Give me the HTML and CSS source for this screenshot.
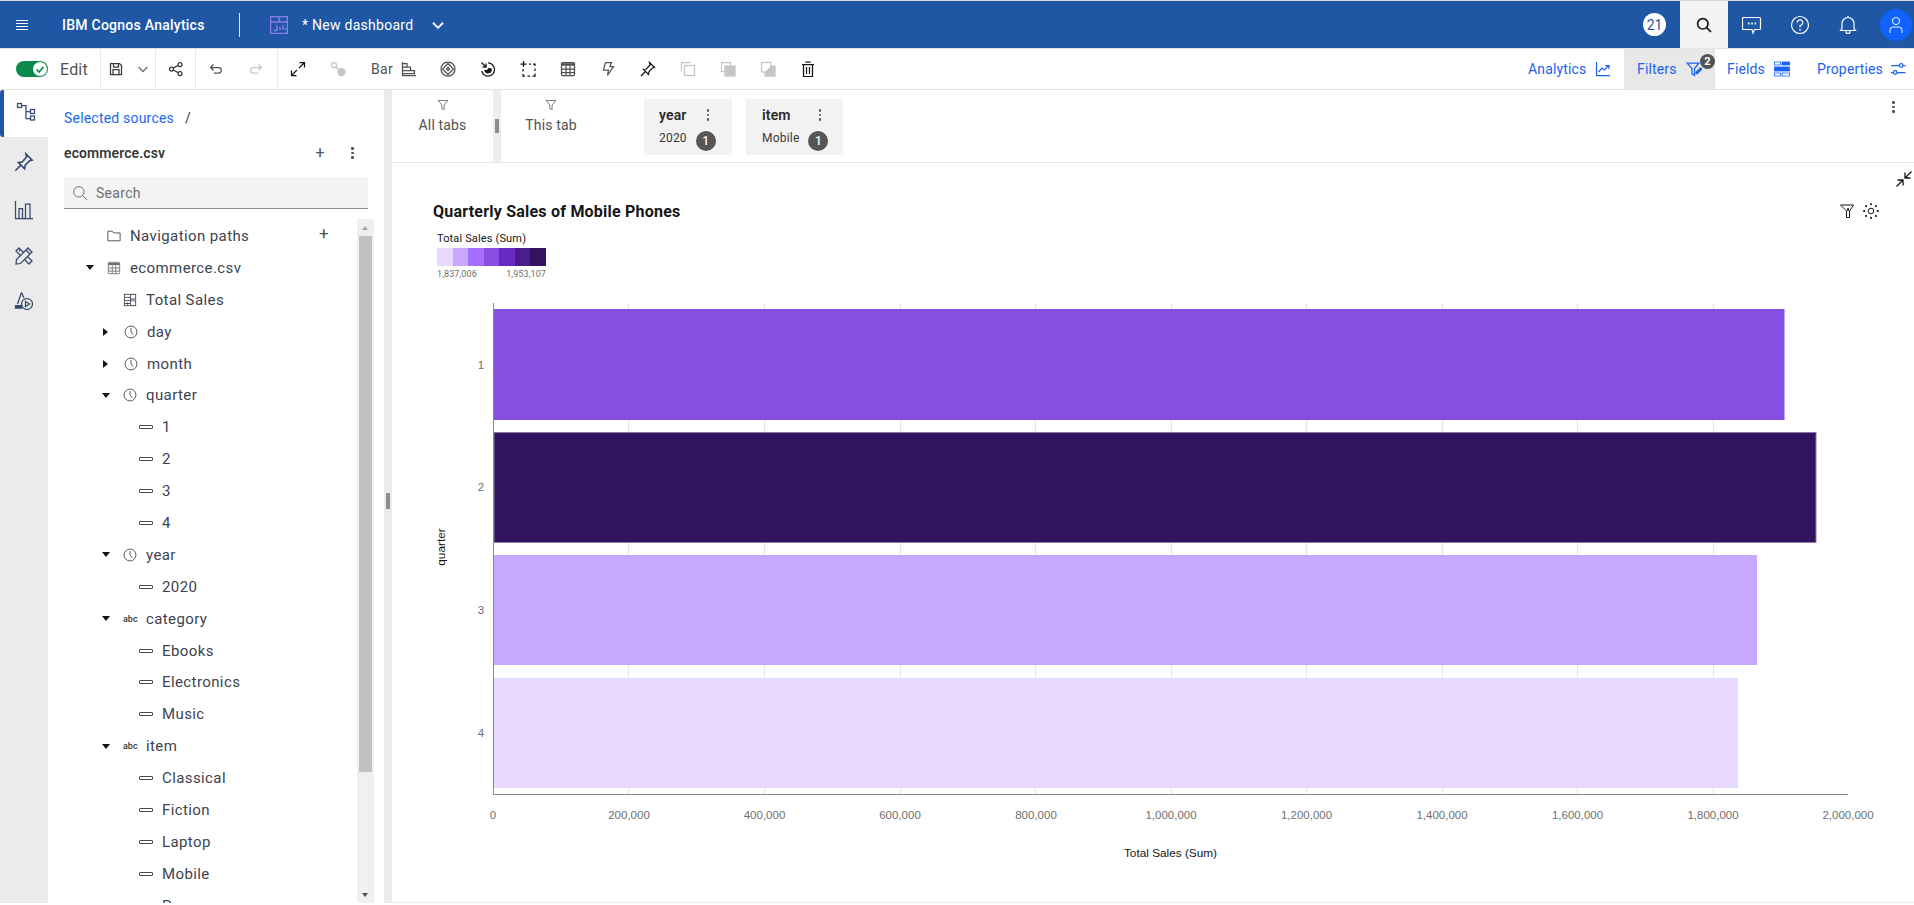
FILE: index.html
```html
<!DOCTYPE html>
<html lang="en">
<head>
<meta charset="utf-8">
<title>IBM Cognos Analytics</title>
<link rel="stylesheet" href="styles.css">
</head>
<body>
<svg class="sprite" width="0" height="0" aria-hidden="true">
  <symbol id="i-save" viewBox="0 0 16 16"><path d="M2.5 2.5h9l2 2v9h-11z"/><path d="M5.5 2.5v3.5h5v-3.5M5 13.5v-5h6v5"/></symbol>
  <symbol id="i-chev" viewBox="0 0 16 16"><path d="M3.5 6l4.5 4.500L12.500 6"/></symbol>
  <symbol id="i-share" viewBox="0 0 16 16"><circle cx="12" cy="3.500" r="2"/><circle cx="3.500" cy="8" r="2"/><circle cx="12" cy="12.500" r="2"/><path d="M5.300 7l4.900-2.600M5.300 9l4.900 2.600"/></symbol>
  <symbol id="i-undo" viewBox="0 0 16 16"><path d="M5.500 3.500L2.500 6.500l3 3M2.500 6.500h8a2.800 2.800 0 0 1 0 5.600H6"/></symbol>
  <symbol id="i-redo" viewBox="0 0 16 16"><path d="M10.500 3.500l3 3-3 3M13.500 6.500h-8a2.800 2.800 0 0 0 0 5.600H10"/></symbol>
  <symbol id="i-expand" viewBox="0 0 16 16"><path d="M9.500 1.500h5v5M14.500 1.500l-5.500 5.500M6.500 14.500h-5v-5M1.500 14.500l5.500-5.500"/></symbol>
  <symbol id="i-link" viewBox="0 0 16 16"><circle cx="4" cy="4" r="2.500"/><circle cx="11.500" cy="11" r="3.500" fill="currentColor"/><path d="M6 6l3 3"/></symbol>
  <symbol id="i-barh" viewBox="0 0 16 16"><path d="M1.500 1v13.500H15M1.500 2.500h4.500v3.500H1.500M1.500 6h8v3.500H1.500M1.500 9.500h12v3H1.500"/></symbol>
  <symbol id="i-diamond" viewBox="0 0 16 16"><circle cx="8" cy="8" r="7"/><path d="M8 2.500L13.500 8 8 13.500 2.500 8z"/><path d="M8 6.300L9.700 8 8 9.700 6.300 8z"/></symbol>
  <symbol id="i-spin" viewBox="0 0 16 16"><path d="M8 2a6.500 6.500 0 1 1-6.300 8"/><path d="M1.500 1.500l4.500 4.500M6 2.500V6H2.500"/><path d="M11 8a3 3 0 0 1-6 1.500c2 .2 3.500-.2 4-2z" fill="currentColor"/></symbol>
  <symbol id="i-select" viewBox="0 0 16 16"><path d="M3.500 0v6M.5 3h6" /><path d="M9 3h2M13 3h2v2M15 7.500v2.500M15 12.500v2.500h-2.500M10 15H7.500M5 15H3v-2M3 10.500V8" /></symbol>
  <symbol id="i-table" viewBox="0 0 16 16"><rect x="1.500" y="1.500" width="13" height="13" rx="1"/><path d="M1.500 3.500h13" stroke-width="2.500"/><path d="M1.500 8h13M1.500 11.500h13M6 5v9.500M10 5v9.500"/></symbol>
  <symbol id="i-bolt" viewBox="0 0 16 16"><path d="M5.500 1.500h6L10 5.500h3.500L7.500 14.500 8.500 9H3.500z"/></symbol>
  <symbol id="i-pin" viewBox="0 0 16 16"><path d="M9.500 1.500l5 5-2 .5-3.500 3.500-.5 3-5-5 3-.5L10 4z"/><path d="M5.500 10.500L1 15"/></symbol>
  <symbol id="i-copy" viewBox="0 0 16 16"><path d="M1.500 10.500v-9h9"/><rect x="4.500" y="4.500" width="10" height="10"/></symbol>
  <symbol id="i-front" viewBox="0 0 16 16"><path d="M4.500 10.500h-3v-9h9v3"/><rect x="5" y="5" width="10" height="10" fill="currentColor"/></symbol>
  <symbol id="i-back" viewBox="0 0 16 16"><path d="M11 5h4v10H5v-4" fill="currentColor"/><rect x="1.500" y="1.500" width="9.500" height="9.500"/></symbol>
  <symbol id="i-trash" viewBox="0 0 16 16"><path d="M2 3.500h12M5.500 1h5M3.500 3.500v12h9v-12M6.500 6v7M9.500 6v7"/></symbol>
  <symbol id="i-analytics" viewBox="0 0 16 16"><path d="M1.500 1v13.500H15"/><path d="M3.500 11l3.500-4 2.500 2 4-4.500M10.500 4.500h3.500V8"/></symbol>
  <symbol id="i-filteredit" viewBox="0 0 16 16"><path d="M1 2h12L8.500 7.500v7l-2.500-1.500V7.500z"/><path d="M10 11.500L14.500 7l1.200 1.200-4.500 4.500H10z" fill="currentColor"/></symbol>
  <symbol id="i-fields" viewBox="0 0 16 16"><rect x=".5" y="1" width="6" height="3"/><rect x="8" y="1" width="7.500" height="3" fill="currentColor"/><rect x=".5" y="6" width="15" height="4" fill="currentColor"/><rect x=".5" y="12" width="6" height="3"/><rect x="8" y="12" width="7.500" height="3"/></symbol>
  <symbol id="i-sliders" viewBox="0 0 16 16"><path d="M1 4.500h8.500M13 4.500h2.500M1 11.500h2.500M7 11.500h8.500"/><circle cx="11.200" cy="4.500" r="1.800"/><circle cx="5.200" cy="11.500" r="1.800"/></symbol>
  <symbol id="i-funnel" viewBox="0 0 16 16"><path d="M1.500 2h13L9.500 8v6l-3-1V8z"/></symbol>
  <symbol id="i-search" viewBox="0 0 16 16"><circle cx="6.800" cy="6.800" r="5.200"/><path d="M10.600 10.600L15 15"/></symbol>
  <symbol id="i-chat" viewBox="0 0 20 20"><path d="M2.500 2.500h15a1 1 0 0 1 1 1v10a1 1 0 0 1-1 1h-5l-1.500 3.500-1-3.500h-8.500a1 1 0 0 1-1-1v-10a1 1 0 0 1 1-1z"/><path d="M6 8.500h1.500M9.300 8.500h1.500M12.600 8.500h1.500" stroke-width="2"/></symbol>
  <symbol id="i-help" viewBox="0 0 20 20"><circle cx="10" cy="10" r="8.500"/><path d="M7.200 7.800A2.800 2.800 0 1 1 10 10.500v2"/><path d="M10 14v1.500" stroke-width="1.500"/></symbol>
  <symbol id="i-bell" viewBox="0 0 20 20"><path d="M2.500 15.500l1.500-2v-5a6 6 0 0 1 12 0v5l1.500 2zM8 15.500v1a2 2 0 0 0 4 0v-1M10 2.500v-1.500"/></symbol>
  <symbol id="i-user" viewBox="0 0 20 24"><circle cx="10" cy="7" r="4.500"/><path d="M2.500 22v-3.500a4 4 0 0 1 4-4h7a4 4 0 0 1 4 4V22"/></symbol>
  <symbol id="i-tree" viewBox="0 0 20 20"><rect x="1.500" y="1.500" width="4" height="4"/><rect x="14.500" y="7.500" width="4" height="4"/><rect x="14.500" y="14" width="4" height="4"/><path d="M5.500 3.500h4.500v13h4.500M10 9.500h4.500"/></symbol>
  <symbol id="i-barv" viewBox="0 0 20 20"><path d="M1.500 1v17.500H19M5 18V8.500h3.500V18M11.500 18V4H16v14"/></symbol>
  <symbol id="i-tools" viewBox="0 0 20 20"><path d="M2 5l3-3 13 13-3 3zM6.500 3.500L5 5M10 7l-1.500 1.500M13.500 10.500L12 12"/><path d="M14 2l4 4L6.500 17.500 2 18l.5-4.500z" fill="#ebebeb"/><path d="M12 4l4 4"/></symbol>
  <symbol id="i-shape" viewBox="0 0 20 20"><path d="M7.500 1.500L3.500 13M7.500 1.500L10 7"/><path d="M1.500 14.500h6v2.500h-6z" fill="currentColor"/><circle cx="13" cy="13" r="5.500"/><path d="M11.500 10.500l4 2.500-4 2.500z"/></symbol>
  <symbol id="i-folder" viewBox="0 0 16 16"><path d="M1 2.500h5l1.500 2h7.500v9H1z"/></symbol>
  <symbol id="i-clock" viewBox="0 0 16 16"><circle cx="8" cy="8" r="6.800"/><path d="M8 3.500v4.500l2.500 3"/></symbol>
  <symbol id="i-measure" viewBox="0 0 16 16"><rect x="1.500" y="1.500" width="13" height="13"/><path d="M8.500 1.500v13M1.500 5h7M1.500 8.500h7M1.500 12h7M3.500 12h3M5 10.500v3"/><rect x="9" y="6" width="5" height="3.500" fill="currentColor" stroke="none" opacity=".55"/></symbol>
  <symbol id="i-collapse" viewBox="0 0 20 20"><path d="M11 3.500V9h5.500M11 9l6.500-6.500M9 16.500V11H3.500M9 11l-6.500 6.500"/></symbol>
  <symbol id="i-filterx" viewBox="0 0 16 16"><path d="M1.500 2h13L10.500 8v6.500h-3V8z" /><path d="M9 5v3" stroke-width="1.600"/></symbol>
  <symbol id="i-gear" viewBox="0 0 16 16"><circle cx="8" cy="8" r="2.800"/><path d="M8 1v.3M8 14.700v.3M1 8h.3M14.700 8h.3M3 3l.2.2M12.800 12.800l.2.2M13 3l-.2.2M3 13l.2-.2" stroke-width="1.900" stroke-linecap="round"/></symbol>
</svg>

<header class="topbar">
  <button class="hamburger" aria-label="Menu"><span></span><span></span><span></span><span></span></button>
  <span class="brand">IBM Cognos Analytics</span>
  <span class="top-sep"></span>
  <svg class="dash-ic" viewBox="0 0 18 18"><rect x=".5" y=".5" width="17" height="17"/><path d="M.5 6h17M9 .5V6M7 9v5a2 2 0 0 1-3 0M10 11v3M13 9v5M15.500 12v2"/></svg>
  <span class="dash-name">* New dashboard</span>
  <svg class="ic top-chev"><use href="#i-chev"/></svg>
  <span class="spacer"></span>
  <span class="count">21</span>
  <span class="top-search"><svg class="ic"><use href="#i-search"/></svg></span>
  <span class="top-btn"><svg class="ic20"><use href="#i-chat"/></svg></span>
  <span class="top-btn"><svg class="ic20"><use href="#i-help"/></svg></span>
  <span class="top-btn"><svg class="ic20"><use href="#i-bell"/></svg></span>
  <span class="avatar"><svg class="ic-user"><use href="#i-user"/></svg></span>
</header>

<nav class="toolbar">
  <div class="tb-group tb-edit">
    <span class="toggle"><span class="knob"><svg viewBox="0 0 14 14"><path d="M3.500 7.500l2.500 2.500 4.500-5"/></svg></span></span>
    <span class="edit-label">Edit</span>
  </div>
  <div class="tb-group tb-save">
    <svg class="ic"><use href="#i-save"/></svg>
    <svg class="ic chev-gray"><use href="#i-chev"/></svg>
  </div>
  <div class="tb-group tb-w40"><svg class="ic"><use href="#i-share"/></svg></div>
  <div class="tb-group tb-w80">
    <span class="tb-btn"><svg class="ic"><use href="#i-undo"/></svg></span>
    <span class="tb-btn off"><svg class="ic"><use href="#i-redo"/></svg></span>
  </div>
  <div class="tb-tools">
    <span class="tb-btn dark"><svg class="ic"><use href="#i-expand"/></svg></span>
    <span class="tb-btn off"><svg class="ic"><use href="#i-link"/></svg></span>
    <span class="tb-bar">Bar<svg class="ic"><use href="#i-barh"/></svg></span>
    <span class="tb-btn"><svg class="ic"><use href="#i-diamond"/></svg></span>
    <span class="tb-btn dark"><svg class="ic"><use href="#i-spin"/></svg></span>
    <span class="tb-btn dark"><svg class="ic"><use href="#i-select"/></svg></span>
    <span class="tb-btn"><svg class="ic"><use href="#i-table"/></svg></span>
    <span class="tb-btn"><svg class="ic"><use href="#i-bolt"/></svg></span>
    <span class="tb-btn dark"><svg class="ic"><use href="#i-pin"/></svg></span>
    <span class="tb-btn off"><svg class="ic"><use href="#i-copy"/></svg></span>
    <span class="tb-btn off"><svg class="ic"><use href="#i-front"/></svg></span>
    <span class="tb-btn off"><svg class="ic"><use href="#i-back"/></svg></span>
    <span class="tb-btn dark"><svg class="ic"><use href="#i-trash"/></svg></span>
  </div>
  <span class="spacer"></span>
  <div class="tab tab-analytics"><span>Analytics</span><svg class="ic"><use href="#i-analytics"/></svg></div>
  <div class="tab tab-filters"><span>Filters</span><svg class="ic"><use href="#i-filteredit"/></svg><b class="tab-badge">2</b></div>
  <div class="tab tab-fields"><span>Fields</span><svg class="ic"><use href="#i-fields"/></svg></div>
  <div class="tab tab-props"><span>Properties</span><svg class="ic"><use href="#i-sliders"/></svg></div>
</nav>

<div class="workspace">
  <aside class="rail">
    <span class="rail-item active"><svg class="ic20"><use href="#i-tree"/></svg></span>
    <span class="rail-item"><svg class="ic20"><use href="#i-pin"/></svg></span>
    <span class="rail-item"><svg class="ic20"><use href="#i-barv"/></svg></span>
    <span class="rail-item"><svg class="ic20"><use href="#i-tools"/></svg></span>
    <span class="rail-item"><svg class="ic20"><use href="#i-shape"/></svg></span>
  </aside>

  <section class="panel">
    <div class="crumbs"><a class="crumb-link">Selected sources</a><span class="crumb-sep">/</span></div>
    <div class="source-row">
      <span class="source-name">ecommerce.csv</span>
      <span class="plus">+</span>
      <span class="kebab"><i></i><i></i><i></i></span>
    </div>
    <div class="search"><svg class="ic"><use href="#i-search"/></svg><span>Search</span></div>
    <div class="tree-wrap">
      <ul class="tree">
        <li class="row l0"><span class="tri"></span><svg class="ic14"><use href="#i-folder"/></svg><span>Navigation paths</span><span class="row-plus">+</span></li>
        <li class="row l0"><span class="tri down"></span><svg class="ic14 gray"><use href="#i-table"/></svg><span>ecommerce.csv</span></li>
        <li class="row l1"><span class="tri"></span><svg class="ic14"><use href="#i-measure"/></svg><span>Total Sales</span></li>
        <li class="row l1"><span class="tri right"></span><svg class="ic14"><use href="#i-clock"/></svg><span>day</span></li>
        <li class="row l1"><span class="tri right"></span><svg class="ic14"><use href="#i-clock"/></svg><span>month</span></li>
        <li class="row l1"><span class="tri down"></span><svg class="ic14"><use href="#i-clock"/></svg><span>quarter</span></li>
        <li class="row l2"><span class="dash"></span><span>1</span></li>
        <li class="row l2"><span class="dash"></span><span>2</span></li>
        <li class="row l2"><span class="dash"></span><span>3</span></li>
        <li class="row l2"><span class="dash"></span><span>4</span></li>
        <li class="row l1"><span class="tri down"></span><svg class="ic14"><use href="#i-clock"/></svg><span>year</span></li>
        <li class="row l2"><span class="dash"></span><span>2020</span></li>
        <li class="row l1"><span class="tri down"></span><span class="abc">abc</span><span>category</span></li>
        <li class="row l2"><span class="dash"></span><span>Ebooks</span></li>
        <li class="row l2"><span class="dash"></span><span>Electronics</span></li>
        <li class="row l2"><span class="dash"></span><span>Music</span></li>
        <li class="row l1"><span class="tri down"></span><span class="abc">abc</span><span>item</span></li>
        <li class="row l2"><span class="dash"></span><span>Classical</span></li>
        <li class="row l2"><span class="dash"></span><span>Fiction</span></li>
        <li class="row l2"><span class="dash"></span><span>Laptop</span></li>
        <li class="row l2"><span class="dash"></span><span>Mobile</span></li>
        <li class="row l2"><span class="dash"></span><span>Pop</span></li>
      </ul>
      <div class="scrollbar"><span class="sb-up"></span><span class="sb-thumb"></span><span class="sb-down"></span></div>
    </div>
  </section>

  <div class="gutter"><span class="grip"></span></div>

  <main class="main">
    <div class="filterbar">
      <div class="scope"><svg class="ic12"><use href="#i-funnel"/></svg><span>All tabs</span></div>
      <div class="scope-gutter"><span class="scope-grip"></span></div>
      <div class="scope"><svg class="ic12"><use href="#i-funnel"/></svg><span>This tab</span></div>
      <div class="chip chip-year">
        <div class="chip-head"><b>year</b><span class="kebab"><i></i><i></i><i></i></span></div>
        <div class="chip-val"><span>2020</span><em class="chip-badge">1</em></div>
      </div>
      <div class="chip chip-item">
        <div class="chip-head"><b>item</b><span class="kebab"><i></i><i></i><i></i></span></div>
        <div class="chip-val"><span>Mobile</span><em class="chip-badge">1</em></div>
      </div>
      <span class="kebab bar-kebab"><i></i><i></i><i></i></span>
    </div>

    <div class="canvas">
      <svg class="ic20 collapse"><use href="#i-collapse"/></svg>
      <div class="widget-icons">
        <svg class="ic"><use href="#i-filterx"/></svg>
        <svg class="ic"><use href="#i-gear"/></svg>
      </div>
      <h1 class="title">Quarterly Sales of Mobile Phones</h1>
      <div class="legend">
        <div class="legend-title">Total Sales (Sum)</div>
        <div class="ramp"><i class="c1"></i><i class="c2"></i><i class="c3"></i><i class="c4"></i><i class="c5"></i><i class="c6"></i><i class="c7"></i></div>
        <div class="legend-scale"><span>1,837,006</span><span>1,953,107</span></div>
      </div>
      <svg class="chart" viewBox="392 296 1522 607">
        <g class="grid">
          <path d="M628.500 303V794M764.500 303V794M900.500 303V794M1035.500 303V794M1171.500 303V794M1306.500 303V794M1442.500 303V794M1577.500 303V794M1713.500 303V794"/>
        </g>
        <rect class="bar1" x="494" y="309" width="1290.500" height="111"/>
        <rect class="bar2" x="494" y="432.500" width="1322" height="110"/>
        <rect class="bar3" x="494" y="555" width="1263" height="110"/>
        <rect class="bar4" x="494" y="678" width="1244" height="110"/>
        <path class="axis" d="M493.500 303V794.500H1848"/>
        <g class="tick-y">
          <text x="481" y="369">1</text>
          <text x="481" y="491">2</text>
          <text x="481" y="614">3</text>
          <text x="481" y="737">4</text>
        </g>
        <g class="tick-x">
          <text x="493" y="819">0</text>
          <text x="629" y="819">200,000</text>
          <text x="764.500" y="819">400,000</text>
          <text x="900" y="819">600,000</text>
          <text x="1036" y="819">800,000</text>
          <text x="1171" y="819">1,000,000</text>
          <text x="1306.500" y="819">1,200,000</text>
          <text x="1442" y="819">1,400,000</text>
          <text x="1577.500" y="819">1,600,000</text>
          <text x="1713" y="819">1,800,000</text>
          <text x="1848" y="819">2,000,000</text>
        </g>
        <text class="axis-title" x="1170.500" y="857">Total Sales (Sum)</text>
        <text class="axis-title" transform="translate(445 547) rotate(-90)">quarter</text>
      </svg>
    </div>
  </main>
</div>
</body>
</html>
```
FILE: styles.css
```css
* { box-sizing: border-box; }
html, body { margin: 0; padding: 0; height: 905px; overflow: hidden; background: #fff; }
body { font-family: Roboto, "Noto Sans", sans-serif; font-size: 14px; color: #393939; }
.sprite { position: absolute; }
svg { display: block; fill: none; stroke: currentColor; stroke-width: 1; }
.ic { width: 16px; height: 16px; flex: none; }
.ic12 { width: 12px; height: 12px; flex: none; }
.ic14 { width: 14px; height: 14px; flex: none; }
.ic20 { width: 20px; height: 20px; flex: none; }
.spacer { flex: 1; }

/* top bar */
.topbar { margin-top: 1px; height: 47px; background: #1f57a4; color: #fff; display: flex; align-items: center; box-shadow: 0 -1px 0 #d5d9df; }
.topbar .ic20 { stroke-width: 1.2; }
.hamburger { width: 44px; padding: 0 0 0 16px; background: none; border: 0; display: flex; flex-direction: column; gap: 2px; }
.hamburger span { display: block; width: 12px; height: 1px; background: #fff; }
.brand { margin-left: 18px; width: 177px; font-weight: 500; font-size: 14px; letter-spacing: .25px; }
.top-sep { width: 1px; height: 24px; background: #e0e6f0; }
.dash-ic { margin-left: 30px; width: 18px; height: 18px; color: #8e7bec; stroke-width: 1.5; }
.dash-name { margin-left: 14px; width: 109px; font-size: 14px; letter-spacing: .27px; white-space: nowrap; }
.top-chev { margin-left: 18px; stroke-width: 1.6; width: 18px; height: 18px; }
.count { width: 23px; height: 23px; border-radius: 50%; background: #fff; color: #1f57a4; font-size: 14px; display: flex; align-items: center; justify-content: center; margin-right: 14px; }
.top-search { width: 48px; height: 47px; background: #f4f4f4; color: #161616; display: flex; align-items: center; justify-content: center; }
.top-search svg { stroke-width: 1.7; }
.top-btn { width: 48px; display: flex; justify-content: center; }
.avatar { width: 32px; height: 32px; margin: 0 2px 0 8px; border-radius: 50%; background: #0f62fe; display: flex; align-items: center; justify-content: center; }
.ic-user { width: 16px; height: 20px; stroke-width: 1.2; }

/* toolbar */
.toolbar { border-top: 1px solid #e4e4e4; border-bottom: 1px solid #e4e4e4; display: flex; height: 42px; align-items: stretch; color: #393939; }
.toolbar svg { stroke-width: 1.25; }
.tb-group { border-right: 1px solid #e8e8e8; display: flex; align-items: center; }
.tb-edit { width: 101px; padding-left: 16px; }
.toggle { width: 32px; height: 16px; background: #0a8a4b; border-radius: 8px; display: flex; justify-content: flex-end; align-items: center; padding-right: 1px; }
.knob { width: 14px; height: 14px; background: #fff; border-radius: 50%; color: #0a8a4b; }
.toolbar .knob svg { width: 14px; height: 14px; stroke-width: 1.7; }
.edit-label { margin-left: 12px; font-size: 16px; letter-spacing: .2px; color: #525252; }
.tb-save { width: 55px; padding-left: 7px; }
.chev-gray { margin-left: 11px; color: #6f6f6f; }
.tb-w40 { width: 40px; justify-content: center; }
.tb-w80 { width: 82px; }
.tb-btn { width: 40px; display: flex; align-items: center; justify-content: center; color: #525252; }
.tb-btn.dark { color: #161616; }
.tb-btn.off { color: #c6c6c6; }
.tb-tools { display: flex; align-items: stretch; }
.tb-bar { width: 70px; padding-left: 13px; display: flex; align-items: center; gap: 8px; letter-spacing: .3px; color: #525252; }
.tab { display: flex; align-items: center; justify-content: space-between; color: #1b62ef; font-size: 14px; letter-spacing: .15px; position: relative; }
.tab-analytics { width: 108px; padding: 0 13px 0 12px; }
.tab-filters { width: 91px; padding: 0 13px; background: #e8e8e8; }
.tab-fields { width: 90px; padding: 0 15px 0 12px; }
.toolbar .tab-fields svg { stroke-width: .8; }
.tab-props { width: 109px; padding: 0 8px 0 12px; }
.tab-badge { position: absolute; left: 76px; top: 5px; width: 15px; height: 15px; border-radius: 50%; background: #525252; color: #fff; font-size: 11px; display: flex; align-items: center; justify-content: center; }

/* workspace */
.workspace { height: 813px; display: flex; }
.rail { width: 48px; background: #ebebeb; display: grid; grid-template-rows: 47px 49px 47px 45px 45px; align-content: start; color: #33496e; }
.rail-item { display: flex; align-items: center; justify-content: center; }
.rail-item svg { stroke-width: 1.25; }
.rail-item.active { background: #fff; border-left: 4px solid #1f57a4; border-radius: 3px 0 0 3px; padding-bottom: 3px; }

.panel { width: 336px; padding-left: 16px; display: flex; flex-direction: column; overflow: hidden; }
.crumbs { margin-top: 18px; height: 20px; line-height: 20px; display: flex; }
.crumb-link { color: #2269ee; letter-spacing: .2px; }
.crumb-sep { margin-left: 11px; }
.source-row { margin-top: 15px; height: 20px; line-height: 20px; display: flex; align-items: center; width: 304px; }
.source-name { font-weight: 600; font-size: 14px; letter-spacing: .1px; color: #393939; width: 251px; }
.plus { font-size: 16px; font-weight: 400; width: 10px; text-align: center; color: #525252; }
.kebab { display: flex; flex-direction: column; align-items: center; gap: 2px; width: 3px; }
.kebab i { display: block; width: 2.500px; height: 2.500px; background: #525252; border-radius: 50%; }
.source-row .kebab { margin-left: 26px; }
.search { margin-top: 14px; width: 304px; height: 32px; background: #f4f4f4; border-bottom: 1px solid #8d8d8d; display: flex; align-items: center; padding-left: 8px; gap: 8px; color: #6f6f6f; letter-spacing: .3px; flex: none; }
.tree-wrap { position: relative; margin-top: 10px; width: 310px; height: 685px; }
.tree { list-style: none; margin: 0; padding: 1px 0 0; height: 685px; overflow: hidden; }
.row { height: 31.900px; display: flex; align-items: center; position: relative; font-size: 15px; letter-spacing: .4px; color: #3d4450; }
.row > span:last-child, .row > span:nth-last-child(2) { white-space: nowrap; }
.l0 { padding-left: 22px; }
.l1 { padding-left: 38px; }
.l2 { padding-left: 75px; }
.tri { width: 8px; height: 5px; margin-right: 13px; flex: none; }
.tri.down { border-left: 4px solid transparent; border-right: 4px solid transparent; border-top: 5px solid #161616; }
.tri.right { height: 8px; width: 5px; margin-right: 16px; margin-left: 1px; border-top: 4px solid transparent; border-bottom: 4px solid transparent; border-left: 5px solid #161616; }
.row .ic14, .row .abc { margin-right: 9px; color: #3d4450; }
.row .gray { color: #6f6f6f; }
.row .abc { width: 14px; font-size: 9px; font-weight: 500; flex: none; letter-spacing: 0; color: #393939; }
.dash { width: 14px; height: 4px; border: 1px solid #4a4a4a; border-radius: 1px; margin-right: 9px; flex: none; }
.row-plus { position: absolute; left: 255px; top: 3px; font-size: 17px; color: #525252; }
.scrollbar { position: absolute; left: 293px; top: 0; width: 17px; height: 685px; background: #f0f0f0; }
.sb-thumb { position: absolute; left: 2px; top: 17px; width: 13px; height: 536px; background: #c1c1c1; }
.sb-up, .sb-down { position: absolute; left: 5px; width: 0; height: 0; border-left: 3.500px solid transparent; border-right: 3.500px solid transparent; }
.sb-up { top: 7px; border-bottom: 4px solid #a3a3a3; }
.sb-down { bottom: 7px; border-top: 4px solid #505050; }

.gutter { width: 8px; background: #ebebeb; position: relative; }
.grip { position: absolute; left: 2px; top: 403px; width: 4px; height: 16px; background: #8d8d8d; }

/* main */
.main { flex: 1; min-width: 0; display: flex; flex-direction: column; border-bottom: 1px solid #ebebeb; }
.filterbar { height: 73px; border-bottom: 1px solid #e6e6e6; display: flex; align-items: flex-start; position: relative; flex: none; }
.scope { width: 101px; height: 72px; display: flex; flex-direction: column; align-items: center; padding-top: 9px; gap: 6px; font-size: 14px; color: #525252; letter-spacing: .15px; }
.scope:nth-child(3) { width: 100px; }
.scope-gutter { width: 8px; height: 72px; background: #ededed; position: relative; }
.scope-grip { position: absolute; left: 2px; top: 29px; width: 4px; height: 14px; background: #8d8d8d; }
.chip { margin-top: 9px; height: 56px; background: #f2f2f2; padding: 8px 0 0 15px; }
.chip-year { width: 88px; margin-left: 43px; }
.chip-item { width: 97px; margin-left: 14px; padding-left: 16px; }
.chip-head { display: flex; align-items: center; height: 16px; }
.chip-head b { font-weight: 600; font-size: 14px; color: #2b2b2b; letter-spacing: .15px; }
.chip-year .kebab { margin-left: 20px; }
.chip-item .kebab { margin-left: 28px; }
.chip-val { display: flex; align-items: flex-start; margin-top: 8px; font-size: 12px; color: #393939; letter-spacing: .2px; }
.chip-badge { font-style: normal; width: 20px; height: 20px; border-radius: 50%; background: #565656; color: #fff; font-size: 12px; font-weight: 500; display: flex; align-items: center; justify-content: center; margin: 0 0 0 9px; }
.bar-kebab { position: absolute; left: 1500px; top: 11px; }

/* canvas */
.canvas { position: relative; flex: 1; min-height: 0; padding: 39px 0 0 41px; color: #161616; }
.collapse { position: absolute; left: 1502px; top: 6px; stroke-width: 1.3; }
.widget-icons { position: absolute; left: 1447px; top: 40px; display: flex; gap: 8px; color: #161616; }
.title { margin: 0; font-size: 16px; line-height: 20px; font-weight: 700; color: #161616; letter-spacing: .22px; }
.legend { margin: 10px 0 0 4px; width: 109px; }
.legend-title { font-size: 11px; line-height: 14px; color: #161616; white-space: nowrap; letter-spacing: .15px; }
.ramp { display: flex; height: 18px; margin-top: 2px; }
.ramp i { flex: 1; }
.c1 { background: #e8daff; } .c2 { background: #c8a7ff; } .c3 { background: #a56eff; } .c4 { background: #8a4fe0; } .c5 { background: #6929c4; } .c6 { background: #491d8b; } .c7 { background: #31135e; }
.legend-scale { display: flex; justify-content: space-between; margin-top: 2px; font-size: 9px; line-height: 12px; color: #6f6f6f; letter-spacing: .1px; }
.chart { position: absolute; left: 0; top: 133px; width: 1522px; height: 607px; }
.grid path { stroke: #e6e6e6; stroke-width: 1.200; }
.bar1 { fill: #874fe0; stroke: none; }
.bar2 { fill: #31135e; stroke: #8b7aa8; stroke-width: 1; }
.bar3 { fill: #c8a7ff; stroke: none; }
.bar4 { fill: #e8daff; stroke: none; }
.axis { stroke: #8a8a8a; stroke-width: 1; }
.chart text { stroke: none; font-family: "Liberation Sans", Arial, sans-serif; font-size: 11.500px; }
.tick-y text { fill: #6f6f6f; text-anchor: middle; }
.tick-x text { fill: #6f6f6f; text-anchor: middle; }
.chart .axis-title { fill: #161616; text-anchor: middle; font-size: 11.800px; }
```
